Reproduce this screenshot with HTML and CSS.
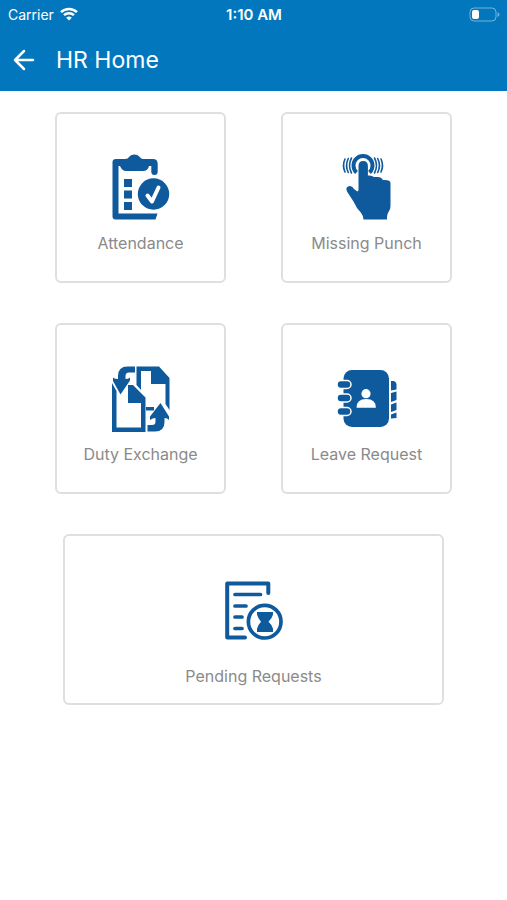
FILE: index.html
```html
<!DOCTYPE html>
<html lang="en">
<head>
    <meta charset="UTF-8">
    <meta name="viewport" content="width=device-width, initial-scale=1.0">
    <title>HR Home</title>
    <link rel="stylesheet" href="styles.css">
</head>
<body>
    <header class="app-header">
        <div class="status-bar">
            <div class="carrier">
                <span>Carrier</span>
                <svg class="wifi" viewBox="0 0 18 14" aria-hidden="true">
                    <path d="M1 5.2a11.5 11.5 0 0 1 16 0" />
                    <path d="M4 8.2a7.2 7.2 0 0 1 10 0" />
                    <path class="dot" d="M6.2 10.8a4 4 0 0 1 5.6 0L9 13.6z" />
                </svg>
            </div>
            <div class="time">1:10 AM</div>
            <div class="battery">
                <svg viewBox="0 0 31 15" aria-hidden="true">
                    <rect class="shell" x="1" y="1" width="26" height="13" rx="4" />
                    <path class="cap" d="M28.5 5v5q2-1 2-2.500t-2-2.500z" />
                    <rect class="level" x="3" y="3" width="7" height="9" rx="2" />
                </svg>
            </div>
        </div>
        <div class="toolbar">
            <button class="back" type="button" aria-label="Back">
                <svg viewBox="0 0 22 22" aria-hidden="true">
                    <path d="M20 11H2M11 2l-9 9 9 9" />
                </svg>
            </button>
            <h1>HR Home</h1>
        </div>
    </header>

    <main class="menu">
        <a class="card" href="#attendance">
            <svg class="icon" viewBox="1 0 80 80" aria-hidden="true">
                <path d="M16 14h9q3 0 4.500-2.500Q31 9.500 34.300 9.500t5 2Q41 14 43.500 14H53q4.700 0 4.700 5v7.500q0 3.500-3.200 3.500t-3.200-3.500V21H49q-1 5-6 5H26q-4 0-6-5h-1.500v47.500h39l-2 6h-40q-3 0-3-3V17q0-3 3.500-3z" />
                <path d="M24 34h8v8h-8zM24 45.500h8v8h-8zM24 57h8v8h-8z" />
                <circle cx="53.500" cy="49" r="15.700" />
                <path class="line-white" stroke-width="4" d="M47.500 50.500l4.500 6 6.500-14" />
            </svg>
            <span>Attendance</span>
        </a>

        <a class="card" href="#missing-punch">
            <svg class="icon" viewBox="-4 0 80 80" aria-hidden="true">
                <path class="line butt" stroke-width="4" d="M25.500 27.500a9.500 9.500 0 1 1 13 0" />
                <path class="line" stroke-width="1.600" d="M20.500 13q-4 7.500 0 15M17.300 13.500q-3.500 7 0 14M14 14q-3 6.500 0 13M43.500 13q4 7.500 0 15M46.700 13.500q3.500 7 0 14M50 14q3 6.500 0 13" />
                <path d="M27.500 21q0-5 4.700-5t4.700 5v9.500q4-.5 6 1.500h4.500q3 0 4.600 3 7.500-.5 7.500 3v23q0 3-1.700 5.500-1.800 2.500-1.800 5.500v2.500H32.500q0-3.500-2.700-7-4.500-4.500-7.300-11L16 46.500q-1.800-4.500 1.700-5.300 3.500-.7 5.300 2.800l3.300 2.500 1.200-1z" />
            </svg>
            <span>Missing Punch</span>
        </a>

        <a class="card" href="#duty-exchange">
            <svg class="icon" viewBox="1 -2 80 80" aria-hidden="true">
                <!-- back page -->
                <path d="M36.500 8.500H59L69.500 20v32l-4-6V26H51V13H41v19l-4.500-5z" />
                <path d="M46 49h8v3.500h-8z" />
                <!-- front page -->
                <path d="M12 25l4.500 8v36.500H41V45H28V27h5l12.500 12.500V74H12z" />
                <!-- arrows -->
                <path d="M35 8.500v6h-6q-3.500 0-3.500 3.500v3q3 0 4.500-1.500v3L20.500 36.500 13 23v-3.500q1.500 1.500 5 1.500v-3q0-9.500 9.500-9.500z" />
                <path d="M47.500 73.500V67H52q3.500 0 3.500-3.500V60q-3 0-5.500 2v-3.500L60.500 45 69 58.500V62q-1.500-2-4.500-2v4q0 9.500-9.500 9.500z" />
            </svg>
            <span>Duty Exchange</span>
        </a>

        <a class="card" href="#leave-request">
            <svg class="icon" viewBox="2 -2 80 80" aria-hidden="true">
                <rect x="18.500" y="12" width="45.500" height="57" rx="8.500" />
                <path d="M66 23h3q2.500 1.500 2.500 3v5.500l-5.500 1zM66 35l5.500-1.500V42L66 44zM66 46.500l5.500-2V52L66 54zM66 56.500l5.500-2V60L66 60.500z" />
                <g class="rings">
                    <rect x="12" y="22.500" width="14" height="8" rx="4" />
                    <rect x="12" y="36" width="14" height="8" rx="4" />
                    <rect x="12" y="49.500" width="14" height="8" rx="4" />
                </g>
                <g class="person">
                    <circle cx="41" cy="35.700" r="4.600" />
                    <path d="M31.500 49.700q0-8.700 9.700-8.700t9.700 8.700z" />
                </g>
            </svg>
            <span>Leave Request</span>
        </a>

        <a class="card card-wide" href="#pending-requests">
            <svg class="icon" viewBox="1 -3 80 80" aria-hidden="true">
                <path class="line" stroke-width="4" d="M55.300 23V13.500H14.200V67.500H32" />
                <path class="line" stroke-width="3.700" d="M22 24.500h25.500M22 36h11M22 47h7M22 58.500h7" />
                <circle class="line" stroke-width="3.700" cx="51.700" cy="51.700" r="16.300" />
                <path d="M44 42h16v2.500q-1 4-4.500 7.200 3.500 3 4.500 7V62H44v-3.300q1-4 4-7-3-3.200-4-7.200z" />
            </svg>
            <span>Pending Requests</span>
        </a>
    </main>
</body>
</html>
```

FILE: styles.css
```css
:root {
    --primary: #0277bd;
    --icon: #0f5a9c;
    --text-light: #8a8a8a;
    --border: #dfdfdf;
    --white: #ffffff;
}

* {
    margin: 0;
    padding: 0;
    box-sizing: border-box;
    font-family: Inter, "Liberation Sans", sans-serif;
}

body {
    min-height: 100vh;
    background-color: var(--white);
}

/* Header */
.app-header {
    background-color: var(--primary);
    color: var(--white);
}

.status-bar {
    display: grid;
    grid-template-columns: 1fr auto 1fr;
    align-items: center;
    height: 28px;
    padding: 0 7px 0 8px;
    font-size: 14px;
}

.carrier {
    display: flex;
    align-items: center;
    gap: 6px;
}

.wifi {
    width: 18px;
    height: 14px;
    fill: none;
    stroke: var(--white);
    stroke-width: 2.5;
}

.wifi .dot {
    fill: var(--white);
    stroke: none;
}

.time {
    font-size: 15px;
    font-weight: 600;
}

.battery {
    display: flex;
    justify-content: flex-end;
}

.battery svg {
    width: 31px;
    height: 15px;
    fill: var(--white);
}

.battery .shell {
    fill: none;
    stroke: var(--white);
    opacity: 0.45;
}

.battery .cap {
    opacity: 0.45;
}

.toolbar {
    display: flex;
    align-items: center;
    gap: 21px;
    height: 63px;
    padding: 0 13px;
}

.toolbar h1 {
    font-size: 23px;
    font-weight: 400;
}

.back {
    display: flex;
    background: none;
    border: none;
    cursor: pointer;
}

.back svg {
    width: 22px;
    height: 22px;
    fill: none;
    stroke: var(--white);
    stroke-width: 2.5;
    stroke-linecap: round;
    stroke-linejoin: round;
}

/* Menu cards */
.menu {
    display: grid;
    grid-template-columns: 171px 171px;
    justify-content: space-evenly;
    row-gap: 40px;
    padding: 21px 0;
}

.card {
    display: flex;
    flex-direction: column;
    align-items: center;
    height: 171px;
    padding-top: 31px;
    border: 2px solid var(--border);
    border-radius: 6px;
    color: var(--text-light);
    font-size: 16px;
    line-height: 20px;
    text-decoration: none;
}

.card span {
    margin-top: 8px;
}

.card-wide {
    grid-column: 1 / -1;
    justify-self: center;
    width: 75vw;
}

.card-wide span {
    margin-top: 19px;
}

.icon {
    width: 80px;
    height: 80px;
    fill: var(--icon);
}

.icon .line,
.icon .line-white {
    fill: none;
    stroke: var(--icon);
    stroke-linecap: round;
    stroke-linejoin: round;
}

.icon .butt {
    stroke-linecap: butt;
}

.icon .line-white {
    stroke: var(--white);
}

.icon .rings {
    stroke: var(--white);
    stroke-width: 1.5;
}

.icon .person {
    fill: var(--white);
}
```
